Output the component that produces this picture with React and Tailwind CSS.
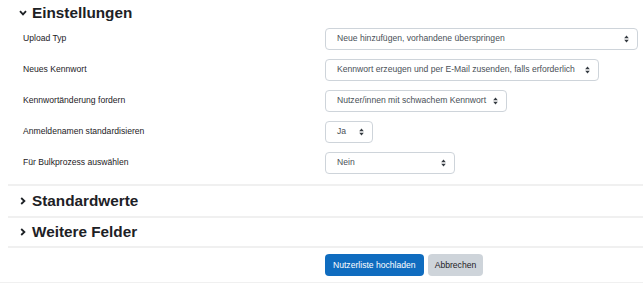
import React from "react";

function Arrows() {
  return (
    <svg width="5" height="8" viewBox="0 0 5 8" className="shrink-0">
      <path d="M2.5 0.5 L4.8 3.3 L0.2 3.3 Z" fill="#343a40" />
      <path d="M2.5 7.5 L4.8 4.7 L0.2 4.7 Z" fill="#343a40" />
    </svg>
  );
}

function Select({ text, w }) {
  return (
    <div
      className={`flex h-[22px] items-center justify-between rounded-[4px] border border-[#ced4da] bg-white pl-[11px] pr-[8px] text-[8.6px] text-[#495057] ${w}`}
    >
      <span className="whitespace-nowrap">{text}</span>
      <Arrows />
    </div>
  );
}

function Chevron({ open }) {
  return open ? (
    <svg width="8" height="6" viewBox="0 0 8 6">
      <path d="M1 1.2 L4 4.4 L7 1.2" fill="none" stroke="#1d2125" strokeWidth="1.8" />
    </svg>
  ) : (
    <svg width="6" height="8" viewBox="0 0 6 8">
      <path d="M1.2 1 L4.4 4 L1.2 7" fill="none" stroke="#1d2125" strokeWidth="1.8" />
    </svg>
  );
}

const rows = [
  ["Upload Typ", "Neue hinzufügen, vorhandene überspringen", "w-[313px]"],
  ["Neues Kennwort", "Kennwort erzeugen und per E-Mail zusenden, falls erforderlich", "w-[274px]"],
  ["Kennwortänderung fordern", "Nutzer/innen mit schwachem Kennwort", "w-[182px]"],
  ["Anmeldenamen standardisieren", "Ja", "w-[48px]"],
  ["Für Bulkprozess auswählen", "Nein", "w-[130px]"],
];

export default function App() {
  return (
    <div
      className="h-[283px] w-[643px] overflow-hidden bg-white text-[#1d2125]"
      style={{ fontFamily: '"Liberation Sans", Arial, sans-serif' }}
    >
      <div className="flex h-[23px] items-center pl-[14px] pt-[3px]">
        <div className="flex w-[18px] justify-center">
          <Chevron open />
        </div>
        <span className="text-[15.3px] font-bold">Einstellungen</span>
      </div>
      <div className="flex flex-col">
        {rows.map(([label, value, w]) => (
          <div key={label} className="flex h-[31px] items-center">
            <div className="w-[325px] pl-[23px] text-[8.6px]">{label}</div>
            <Select text={value} w={w} />
          </div>
        ))}
      </div>
      <div className="ml-[8px] mt-[6px] h-[2px] bg-[#f0f0f0]" />
      <div className="flex h-[30px] items-center pl-[14px]">
        <div className="flex w-[18px] justify-center">
          <Chevron />
        </div>
        <span className="text-[15.3px] font-bold">Standardwerte</span>
      </div>
      <div className="ml-[8px] h-[2px] bg-[#f0f0f0]" />
      <div className="flex h-[28px] items-center pl-[14px]">
        <div className="flex w-[18px] justify-center">
          <Chevron />
        </div>
        <span className="text-[15.3px] font-bold">Weitere Felder</span>
      </div>
      <div className="ml-[8px] h-[2px] bg-[#f0f0f0]" />
      <div className="flex h-[34px] items-center gap-[4px] pl-[325px]">
        <button className="flex h-[22px] items-center rounded-[4px] bg-[#0f6cbf] px-[8px] text-[8.6px] text-white">
          Nutzerliste hochladen
        </button>
        <button className="flex h-[22px] items-center rounded-[4px] bg-[#ced4da] px-[7px] text-[8.6px] text-[#1d2125]">
          Abbrechen
        </button>
      </div>
      <div className="h-[2px] bg-[#f0f0f0]" />
    </div>
  );
}
